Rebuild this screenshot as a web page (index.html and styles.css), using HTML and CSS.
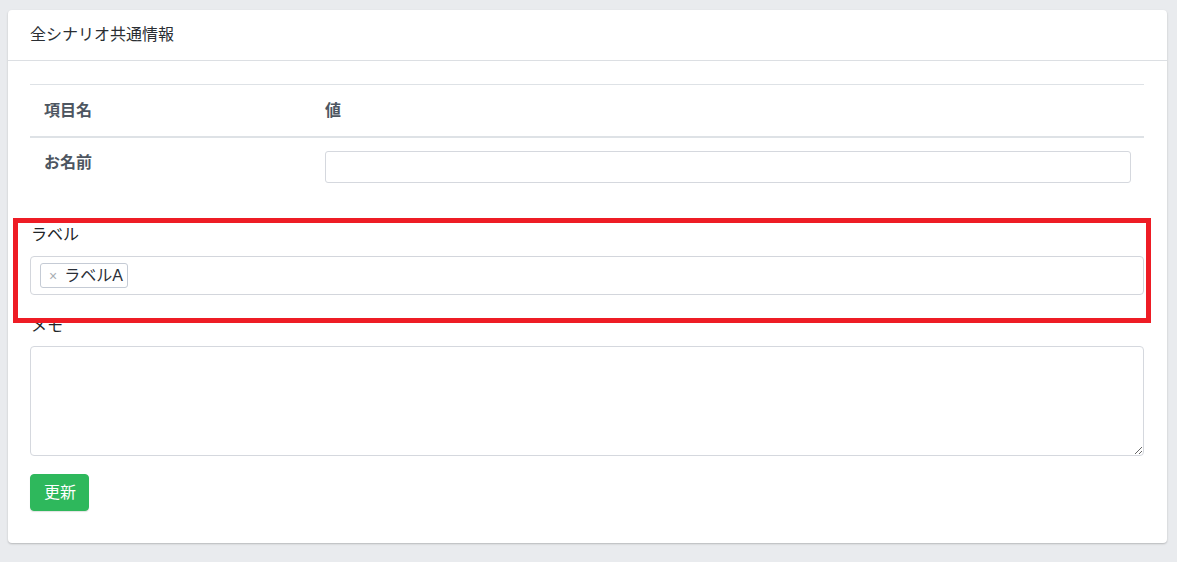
FILE: index.html
```html
<!DOCTYPE html>
<html lang="ja">
<head>
<meta charset="utf-8">
<title>全シナリオ共通情報</title>
<link rel="stylesheet" href="styles.css">
</head>
<body>
<div class="card">
  <div class="card-header">全シナリオ共通情報</div>
  <div class="card-body">
    <table class="info-table">
      <thead>
        <tr><th class="col-name">項目名</th><th>値</th></tr>
      </thead>
      <tbody>
        <tr><th class="row-name">お名前</th><td><input class="text-input" type="text"></td></tr>
      </tbody>
    </table>
    <div class="form-group">
      <label class="form-label">ラベル</label>
      <div class="tag-input">
        <span class="tag"><span class="tag-remove">×</span>ラベルA</span>
      </div>
    </div>
    <div class="form-group memo">
      <label class="form-label">メモ</label>
      <textarea class="memo-area"></textarea>
    </div>
    <button class="btn-submit" type="button">更新</button>
  </div>
</div>
<div class="highlight"></div>
</body>
</html>
```

FILE: styles.css
```css
html, body {
  margin: 0;
  padding: 0;
}
body {
  background: #e9ebee;
  font-family: "Liberation Sans", "Noto Sans CJK JP", sans-serif;
  font-size: 16px;
  line-height: 24px;
  color: #212529;
  padding: 10px 10px 19px 8px;
  position: relative;
}
.card {
  background: #fff;
  border-radius: 4px;
  box-shadow: 0 1px 2px rgba(0, 0, 0, 0.22);
}
.card-header {
  padding: 13px 22px;
  border-bottom: 1px solid #dcdfe3;
  color: #2a2e33;
}
.card-body {
  padding: 23px 23px 32px 22px;
}
.info-table {
  width: 100%;
  border-collapse: collapse;
  border-top: 1px solid #dee2e6;
  margin-bottom: 27px;
}
.info-table thead th {
  text-align: left;
  font-weight: bold;
  color: #4d5661;
  padding: 14px 14px 13px;
  border-bottom: 2px solid #dee2e6;
}
.info-table .col-name {
  width: 253px;
}
.info-table tbody th {
  text-align: left;
  vertical-align: top;
  font-weight: bold;
  color: #4d5661;
  padding: 13px 14px;
}
.info-table tbody td {
  padding: 13px 13px 13px 14px;
}
.text-input {
  display: block;
  box-sizing: border-box;
  width: 100%;
  height: 32px;
  border: 1px solid #d5d8de;
  border-radius: 3px;
  font: inherit;
}
.form-group {
  margin-bottom: 19px;
}
.form-label {
  display: block;
  margin-bottom: 9px;
  padding-left: 1px;
}
.memo .form-label {
  margin-bottom: 8px;
}
.tag-input {
  box-sizing: border-box;
  height: 39px;
  border: 1px solid #d3d6dc;
  border-radius: 4px;
  padding: 5px 9px;
  display: flex;
  align-items: center;
}
.tag {
  display: inline-flex;
  align-items: center;
  box-sizing: border-box;
  height: 25px;
  border: 1px solid #c5cbd5;
  border-radius: 3px;
  padding: 0 4px 0 8px;
  color: #2b3038;
}
.tag-remove {
  color: #a9adb3;
  font-size: 14px;
  margin-right: 7px;
}
.memo-area {
  display: block;
  box-sizing: border-box;
  width: 100%;
  height: 110px;
  border: 1px solid #d5d8de;
  border-radius: 4px;
  font: inherit;
  margin: 0;
}
.memo {
  margin-bottom: 18px;
}
.btn-submit {
  display: block;
  height: 37px;
  padding: 0 12px 0 13px;
  border: 1px solid #2eb85c;
  border-radius: 4px;
  background: #2eb85c;
  color: #fff;
  font: inherit;
  box-shadow: 0 1px 1px rgba(0, 0, 0, 0.12);
}
.highlight {
  position: absolute;
  left: 13px;
  top: 218px;
  width: 1128px;
  height: 95px;
  border: 5px solid #ee1c25;
  pointer-events: none;
}
```
